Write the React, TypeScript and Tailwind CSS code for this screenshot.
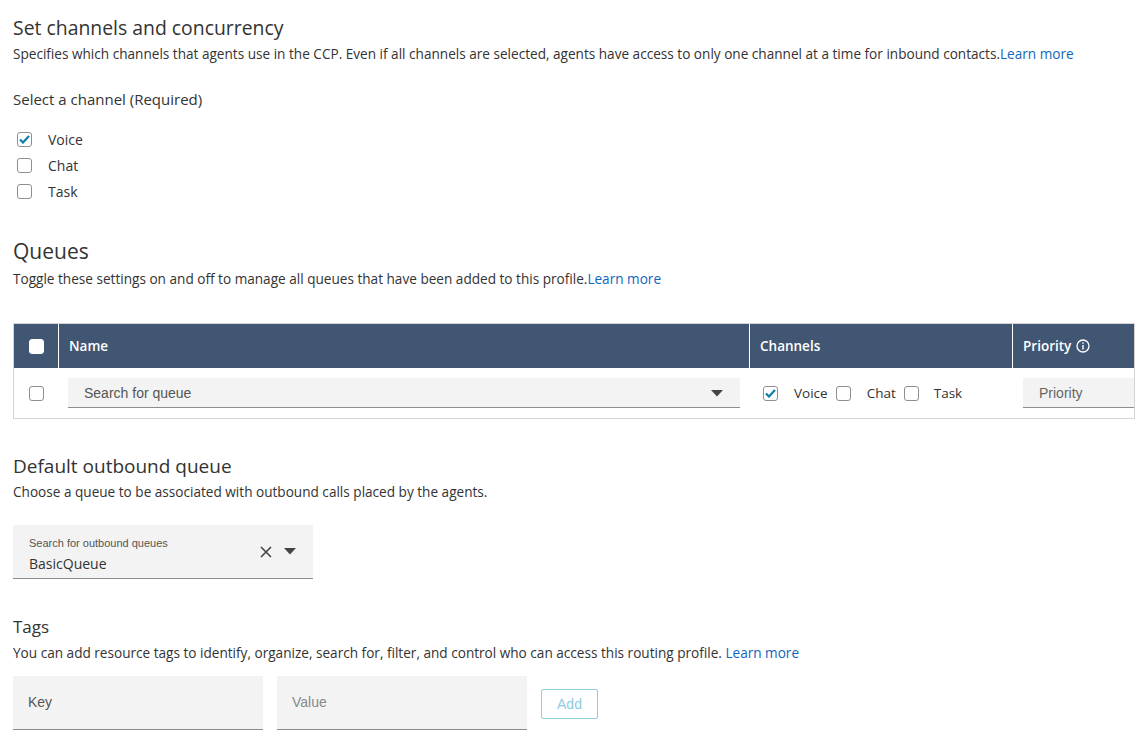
import React from "react";

const Check = ({ checked, dark }: { checked?: boolean; dark?: boolean }) => (
  <span
    className={
      "flex h-[15px] w-[15px] shrink-0 items-center justify-center rounded-[3px] border " +
      (dark ? "border-white bg-white" : "border-[#8f8f8f] bg-white")
    }
  >
    {checked && (
      <svg width="11" height="9" viewBox="0 0 11 9">
        <path d="M1 4.5 L4 7.5 L10 1" fill="none" stroke="#0a7fa8" strokeWidth="2.2" />
      </svg>
    )}
  </span>
);

const Caret = () => (
  <svg width="12" height="7" viewBox="0 0 12 7">
    <path d="M0 0 H12 L6 6.5 Z" fill="#444" />
  </svg>
);

const LearnMore = () => <a className="text-[#1166bb]">Learn more</a>;

export default function App() {
  return (
    <div className="h-[742px] w-[1135px] overflow-hidden bg-white px-[13px] font-['Open_Sans',sans-serif] text-[#333]">
      <h2 className="mt-[14px] text-[19.4px] leading-[28px]">Set channels and concurrency</h2>
      <p className="mt-[2px] text-[13.6px] leading-[20px]">
        Specifies which channels that agents use in the CCP. Even if all channels are selected, agents have access to
        only one channel at a time for inbound contacts.
        <LearnMore />
      </p>
      <div className="mt-[25px] text-[15px] leading-[20px]">Select a channel (Required)</div>
      <div className="mt-[20px] flex flex-col gap-[6px]">
        {["Voice", "Chat", "Task"].map((c, i) => (
          <label key={c} className="flex h-[20px] items-center gap-[16px] pl-[4px] text-[14px]">
            <Check checked={i === 0} />
            {c}
          </label>
        ))}
      </div>

      <h2 className="mt-[35px] text-[21px] leading-[30px]">Queues</h2>
      <p className="mt-[3px] text-[13.6px] leading-[20px]">
        Toggle these settings on and off to manage all queues that have been added to this profile.
        <LearnMore />
      </p>

      <div className="mt-[34px] mr-[-13px] border-x border-y border-[#d5d5d5]">
        <div className="flex h-[44px] bg-[#415672] text-[13.5px] font-semibold text-white">
          <div className="flex w-[45px] items-center justify-center border-r border-white">
            <Check dark />
          </div>
          <div className="flex w-[691px] items-center border-r border-white pl-[10px]">Name</div>
          <div className="flex w-[263px] items-center border-r border-white pl-[10px]">Channels</div>
          <div className="flex flex-1 items-center gap-[5px] pl-[10px]">
            Priority
            <svg width="14" height="14" viewBox="0 0 14 14">
              <circle cx="7" cy="7" r="6" fill="none" stroke="white" strokeWidth="1.3" />
              <rect x="6.3" y="6" width="1.4" height="4.5" fill="white" />
              <rect x="6.3" y="3.3" width="1.4" height="1.5" fill="white" />
            </svg>
          </div>
        </div>
        <div className="flex h-[50px] items-center">
          <div className="flex w-[45px] justify-center">
            <Check />
          </div>
          <div className="flex w-[691px] pl-[9px] pr-[10px]">
            <div className="flex h-[30px] flex-1 items-center justify-between border-b border-[#8c8c8c] bg-[#f3f3f3] pl-[16px] pr-[17px] pt-[2px] font-['Liberation_Sans',sans-serif] text-[14px] text-[#555]">
              Search for queue
              <Caret />
            </div>
          </div>
          <div className="flex w-[263px] items-center pl-[13px] text-[13.5px]">
            <Check checked />
            <span className="ml-[16px]">Voice</span>
            <span className="ml-[8px]"><Check /></span>
            <span className="ml-[16px]">Chat</span>
            <span className="ml-[8px]"><Check /></span>
            <span className="ml-[15px]">Task</span>
          </div>
          <div className="flex flex-1 pl-[10px]">
            <div className="flex h-[30px] flex-1 items-center border-b border-[#8c8c8c] bg-[#f3f3f3] pl-[16px] pt-[2px] font-['Liberation_Sans',sans-serif] text-[14px] text-[#666]">
              Priority
            </div>
          </div>
        </div>
      </div>

      <h2 className="mt-[34px] text-[19px] leading-[26px]">Default outbound queue</h2>
      <p className="mt-[3px] text-[13.6px] leading-[20px]">
        Choose a queue to be associated with outbound calls placed by the agents.
      </p>
      <div className="mt-[23px] flex h-[54px] w-[300px] items-center justify-between border-b border-[#8c8c8c] bg-[#f3f3f3] pl-[16px] pr-[17px]">
        <div className="flex flex-col pt-[5px]">
          <span className="font-['Liberation_Sans',sans-serif] text-[11px] leading-[14px] text-[#555]">
            Search for outbound queues
          </span>
          <span className="mt-[5px] text-[14px] leading-[18px]">BasicQueue</span>
        </div>
        <div className="flex items-center gap-[12px]">
          <svg width="12" height="12" viewBox="0 0 12 12">
            <path d="M1 1 L11 11 M11 1 L1 11" stroke="#444" strokeWidth="1.6" />
          </svg>
          <Caret />
        </div>
      </div>

      <h2 className="mt-[36px] text-[17px] leading-[24px]">Tags</h2>
      <p className="mt-[4px] text-[13.6px] leading-[20px]">
        You can add resource tags to identify, organize, search for, filter, and control who can access this routing
        profile. <LearnMore />
      </p>
      <div className="mt-[13px] flex items-center gap-[14px]">
        <div className="flex h-[54px] w-[250px] items-center border-b border-[#8c8c8c] bg-[#f3f3f3] pl-[15px] font-['Liberation_Sans',sans-serif] text-[14px] text-[#555]">
          Key
        </div>
        <div className="flex h-[54px] w-[250px] items-center border-b border-[#8c8c8c] bg-[#f3f3f3] pl-[15px] font-['Liberation_Sans',sans-serif] text-[14px] text-[#888]">
          Value
        </div>
        <button className="mt-[2px] flex h-[30px] w-[57px] items-center justify-center rounded-[2px] border border-[#8fcfdc] font-['Liberation_Sans',sans-serif] text-[14px] text-[#8ccbe0]">
          Add
        </button>
      </div>
    </div>
  );
}
